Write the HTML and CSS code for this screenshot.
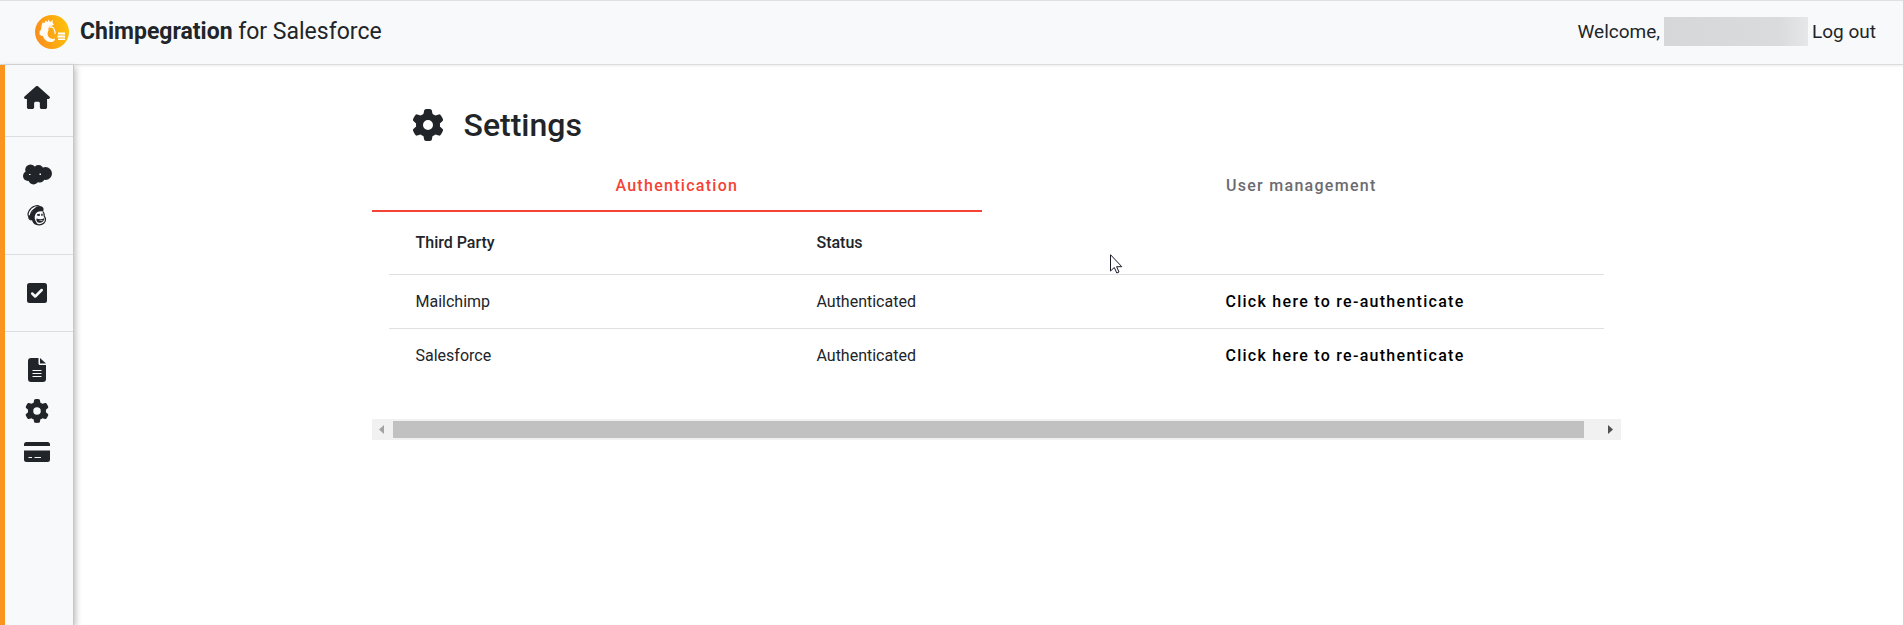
FILE: index.html
```html
<!DOCTYPE html>
<html lang="en">
<head>
  <meta charset="UTF-8" />
  <title>Settings - Chimpegration for Salesforce</title>
  <link rel="stylesheet" href="styles.css">
</head>
<body>
  <!-- shared gear shape -->
  <svg class="defs" aria-hidden="true">
    <symbol id="gear" viewBox="0 0 512 512">
      <path d="M495.9 166.6c3.2 8.7 .5 18.4-6.4 24.6l-43.3 39.4c1.1 8.3 1.7 16.8 1.7 25.4s-.6 17.1-1.7 25.4l43.3 39.4c6.9 6.2 9.6 15.9 6.4 24.6c-4.4 11.9-9.7 23.3-15.8 34.3l-4.7 8.1c-6.6 11-14 21.4-22.1 31.2c-5.9 7.2-15.7 9.6-24.5 6.8l-55.7-17.7c-13.4 10.3-28.2 18.9-44 25.4l-12.5 57.1c-2 9.1-9 16.3-18.2 17.8c-13.8 2.3-28 3.5-42.5 3.5s-28.7-1.2-42.5-3.5c-9.2-1.5-16.2-8.7-18.2-17.8l-12.5-57.1c-15.8-6.5-30.6-15.1-44-25.4L83.1 425.9c-8.8 2.8-18.6 .3-24.5-6.8c-8.1-9.8-15.5-20.2-22.1-31.2l-4.7-8.1c-6.1-11-11.4-22.4-15.8-34.3c-3.2-8.7-.5-18.4 6.4-24.6l43.3-39.4C64.6 273.1 64 264.6 64 256s.6-17.1 1.7-25.4L22.4 191.2c-6.9-6.2-9.6-15.9-6.4-24.6c4.4-11.9 9.7-23.3 15.8-34.3l4.7-8.1c6.6-11 14-21.4 22.1-31.2c5.9-7.2 15.7-9.6 24.5-6.8l55.7 17.7c13.4-10.3 28.2-18.9 44-25.4l12.5-57.1c2-9.1 9-16.3 18.2-17.8C227.3 1.2 241.5 0 256 0s28.7 1.2 42.5 3.5c9.2 1.5 16.2 8.7 18.2 17.8l12.5 57.1c15.8 6.5 30.6 15.1 44 25.4l55.7-17.7c8.8-2.8 18.6-.3 24.5 6.8c8.1 9.8 15.5 20.2 22.1 31.2l4.7 8.1c6.1 11 11.4 22.4 15.8 34.3zM256 336a80 80 0 1 0 0-160 80 80 0 1 0 0 160z"/>
    </symbol>
  </svg>

  <header class="topbar">
    <div class="brand">
      <svg class="logo" viewBox="0 0 34 34" aria-hidden="true">
        <defs>
          <linearGradient id="logoFill" x1="0" x2="1" y1="0.6" y2="0.4">
            <stop offset="0" stop-color="#f98e1d"/>
            <stop offset="0.5" stop-color="#fda712"/>
            <stop offset="1" stop-color="#ffc20a"/>
          </linearGradient>
        </defs>
        <circle cx="17" cy="17" r="17" fill="url(#logoFill)"/>
        <path fill="#fff" fill-opacity=".95" d="M6.500 11l1-3.500 2 .5 1-2.500 2 1.500 1-2.500 1.500 2.500L18 5l-.5 2.500 1.500 2-2.500 1.500c-2.500 0-3.500 2-3 4l-1 3.500c0 3 2 5 5 5.500l2.500-.5c0 3-3 4-5 3.500-3-.5-6-2-7-6-2 0-4-1.500-3.500-3.500 0-1.500 .5-2 1.500-2.500z"/>
        <path fill="none" stroke="#fff" stroke-width="1.200" d="M14.500 12.500c2-1.500 4 0 4.500 1.500 1 2 1.500 3 1 5"/>
        <path fill="#fff" d="M23 17.500h7v2h-7zM22.500 20.500h7.500v2h-7.500zM23 23.500h7v1.500h-7z"/>
      </svg>
      <div class="brand-name"><strong>Chimpegration</strong> for Salesforce</div>
    </div>
    <div class="user">
      <span>Welcome,</span>
      <span class="user-name"></span>
      <a href="#">Log out</a>
    </div>
  </header>

  <div class="layout">
    <nav class="sidebar">
      <div class="group">
        <a href="#" aria-label="Home">
          <svg width="26" height="23" viewBox="0 0 576 512"><path d="M575.8 255.5c0 18-15 32.1-32 32.1h-32l.7 160.2c0 2.7-.2 5.4-.5 8.1V472c0 22.1-17.9 40-40 40H392c-22.1 0-40-17.9-40-40V384c0-17.7-14.3-32-32-32H256c-17.7 0-32 14.3-32 32v88c0 22.1-17.900 40-40 40H104c-22.100 0-40-17.900-40-40V287.600H32c-18 0-32-14-32-32.100c0-9 3-17 10-24L266.400 8c7-7 15-8 22-8s15 2 21 7L564.800 231.500c8 7 12 15 11 24z"/></svg>
        </a>
      </div>
      <div class="group">
        <a href="#" aria-label="Salesforce">
          <svg width="29" height="21" viewBox="0 0 29 21">
            <circle cx="7.500" cy="5.800" r="5.300"/><circle cx="15.500" cy="6" r="5"/><circle cx="22.500" cy="9.500" r="6.500"/>
            <circle cx="5" cy="12" r="5"/><circle cx="10.500" cy="15.500" r="5"/><circle cx="16.500" cy="13" r="5.500"/>
            <path d="M5 5h15v10H5z"/>
            <path class="cut" d="M6 10h1.500v1h-1.500zM16.500 9.500h1.500v1.500h-1.500z"/>
          </svg>
        </a>
        <a href="#" aria-label="Mailchimp">
          <svg width="20" height="21" viewBox="0 0 20 21">
            <!-- cap and hair -->
            <path d="M7.500 3.500C10 .8 13.500.5 15.500 2c1.500 1 1.300 3 .5 4.500-4-.8-7 .5-8 4-.8 2 0 6 3 9-3 0-5-2-6-4.500L3 14.500 1.500 12z"/>
            <path class="line" d="M2 12C-.5 9 2.500 2.500 8 1c2-.6 3.500-.3 4.500.2M3.500 10C4 7 6 4.500 9 3.500"/>
            <path class="line" d="M2 12c.5-2 3-2 3.500 0s-1 3.500-2.500 2.500S1.500 13 2 12z"/>
            <!-- face -->
            <path class="line" d="M16 6.500c1 1.500 1.300 3 1.200 4.500l1.300 2.500c.5 3.500-2.500 6.300-6.500 6.300-3.500 0-5.500-2-6.300-4.500"/>
            <path d="M10 9.300l2.800-.6v2.300l-2.500-.2zM14.200 8.700h1.500v2h-1.500zM9.500 13.500c2.500 1 5.500 1 8-.5-.3 3-2.500 5-5.500 4.800C10 17.500 9 15.500 9.500 13.500z"/>
            <path class="cut" d="M11.500 15.300c1.500.5 3 .3 4.500-.5-.5 1.300-3.300 1.900-4.500.5z"/>
          </svg>
        </a>
      </div>
      <div class="group">
        <a href="#" aria-label="Tasks">
          <svg width="20" height="20" viewBox="0 0 20 20"><rect width="20" height="20" rx="2.500"/><path class="cut-line check" d="M5.200 10.500l3 3 6.500-6.500"/></svg>
        </a>
      </div>
      <div class="group">
        <a href="#" aria-label="Logs">
          <svg width="18" height="24" viewBox="0 0 18 24"><path d="M3 0h7.500v5.500c0 .8.700 1.500 1.500 1.500H18v14a3 3 0 0 1-3 3H3a3 3 0 0 1-3-3V3a3 3 0 0 1 3-3zM12 0L18 5.500h-6z"/><path class="cut-line" d="M4.500 12.500h9M4.500 15.500h9M4.500 18.500h9"/></svg>
        </a>
        <a href="#" aria-label="Settings">
          <svg width="24" height="24"><use href="#gear"/></svg>
        </a>
        <a href="#" aria-label="Billing">
          <svg width="26" height="20" viewBox="0 0 26 20"><path d="M2.500 0h21A2.500 2.500 0 0 1 26 2.500V4H0V2.500A2.500 2.500 0 0 1 2.500 0zM0 8.500h26v9a2.500 2.500 0 0 1-2.500 2.500h-21A2.500 2.500 0 0 1 0 17.500z"/><path class="cut-line" d="M4.500 15.500h3.500M10.500 15.500h6.500"/></svg>
        </a>
      </div>
    </nav>

    <main class="content">
      <h1><svg width="32" height="32" aria-hidden="true"><use href="#gear"/></svg>Settings</h1>

      <div class="tabs" role="tablist">
        <button class="tab active" role="tab" aria-selected="true">Authentication</button>
        <button class="tab" role="tab" aria-selected="false">User management</button>
      </div>

      <div class="table-wrap">
        <table>
          <thead>
            <tr><th>Third Party</th><th>Status</th><th></th></tr>
          </thead>
          <tbody>
            <tr><td>Mailchimp</td><td>Authenticated</td><td><button class="reauth">Click here to re-authenticate</button></td></tr>
            <tr><td>Salesforce</td><td>Authenticated</td><td><button class="reauth">Click here to re-authenticate</button></td></tr>
          </tbody>
        </table>
      </div>

      <div class="scrollbar" aria-hidden="true">
        <svg class="arrow off" width="21" height="21" viewBox="0 0 21 21"><path d="M12 6v9l-5-4.500z"/></svg>
        <div class="track"><div class="thumb"></div></div>
        <svg class="arrow" width="21" height="21" viewBox="0 0 21 21"><path d="M8 6v9l5-4.500z"/></svg>
      </div>
    </main>
  </div>

  <svg class="pointer" width="13" height="21" viewBox="0 0 13 21" aria-hidden="true"><path d="M.5.700v16.300l3.800-3.500 2.500 5.500 2.200-1-2.400-5.300h5.200z"/></svg>
</body>
</html>
```
FILE: styles.css
```css
* { box-sizing: border-box; }
body {
  margin: 0;
  min-height: 100vh;
  display: flex;
  flex-direction: column;
  font-family: Roboto, sans-serif;
  font-size: 16px;
  color: #212529;
  background: #fff;
}
a { color: inherit; text-decoration: none; }
button {
  font-family: inherit;
  border: none;
  background: none;
  cursor: pointer;
}
.defs { display: none; }

/* top bar */
.topbar {
  display: flex;
  justify-content: space-between;
  align-items: center;
  height: 65px;
  padding: 0 27px 2px 35px;
  background: #f8f9fa;
  border-top: 1px solid #e0e0e0;
  border-bottom: 1px solid #dcdcde;
  box-shadow: 0 1px 2px rgba(0,0,0,0.08);
}
.brand { display: flex; align-items: center; gap: 11px; }
.logo { width: 34px; height: 34px; }
.brand-name { font-size: 23px; }
.brand-name strong { font-weight: 700; }
.user {
  display: flex;
  align-items: center;
  gap: 4px;
  font-size: 19px;
}
.user-name {
  width: 144px;
  height: 29px;
  background: linear-gradient(90deg, #d6d7d8, #dadbdc 80%, #e6e7e9);
}

.layout { flex: 1; display: flex; }

/* sidebar */
.sidebar {
  width: 74px;
  background: #f8f9fa;
  border-left: 5px solid #f9941e;
  border-right: 1px solid #c6c7c9;
  box-shadow: 2px 2px 6px rgba(0,0,0,0.25);
}
.group {
  display: flex;
  flex-direction: column;
  padding: 17px 0 18px;
  border-bottom: 1px solid #dcdee1;
}
.group:first-child { padding-top: 12px; }
.group:last-child { border-bottom: none; }
.group a {
  height: 41px;
  padding-right: 4px;
  display: flex;
  align-items: center;
  justify-content: center;
}
.sidebar svg { fill: #212529; }
.sidebar .cut { fill: #f8f9fa; }
.sidebar .cut-line { fill: none; stroke: #f8f9fa; stroke-width: 1.2; }
.sidebar .line { fill: none; stroke: #212529; stroke-width: 1.2; }
.sidebar .check { stroke-width: 2.5; stroke-linecap: round; stroke-linejoin: round; }

/* settings page */
.content {
  flex: 1;
  max-width: 1280px;
  margin: 0 auto;
  padding: 40px 8px 40px 23px;
}
h1 {
  display: flex;
  align-items: center;
  gap: 20px;
  margin: 0 0 23px;
  padding-left: 40px;
  font-size: 32px;
  line-height: 40px;
  font-weight: 500;
}
h1 svg { fill: #212529; }
.tabs { display: flex; }
.tab {
  flex: 1 0 auto;
  height: 44px;
  padding: 0 24px 7px;
  font-size: 16px;
  font-weight: 500;
  letter-spacing: 0.08em;
  color: #6b6b70;
  border-bottom: 2px solid transparent;
}
.tab.active { color: #f44336; border-color: #f44336; }

.table-wrap { padding: 0 17px 37px; }
table {
  width: 100%;
  border-collapse: collapse;
  table-layout: fixed;
}
th, td {
  height: 54px;
  padding: 0 27px;
  text-align: left;
  font-weight: 400;
}
th { height: 62px; font-weight: 500; }
th:last-child { width: 34%; }
tbody tr { border-top: 1px solid #e0e0e0; }
.reauth {
  padding: 8px;
  font-size: 16px;
  font-weight: 500;
  letter-spacing: 0.08em;
  color: #000;
}

.scrollbar { display: flex; height: 21px; background: #f1f1f1; }
.arrow { fill: #505050; }
.arrow.off { fill: #a3a3a3; }
.track { flex: 1; padding: 2px 0; }
.thumb { width: 98.7%; height: 17px; background: #c1c1c1; }

.pointer {
  position: absolute;
  left: 1110px;
  top: 254px;
  fill: #fff;
  stroke: #1b1b2b;
}
```
